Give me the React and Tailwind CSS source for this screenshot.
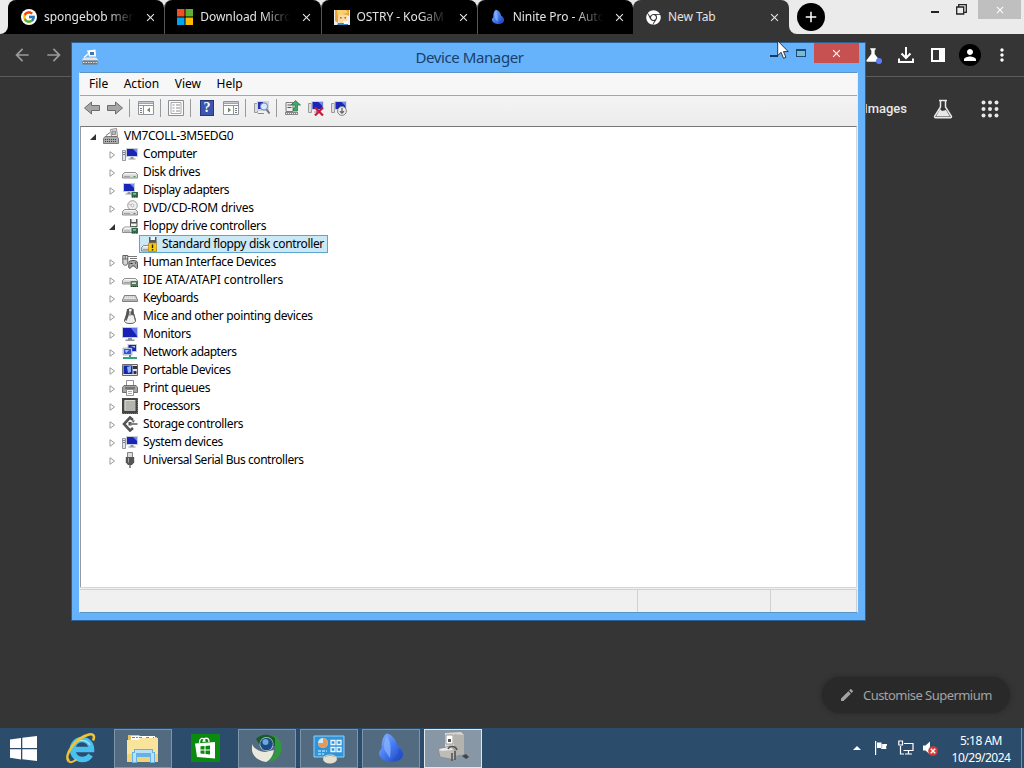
import { FcGoogle } from "react-icons/fc";
import { FaChrome } from "react-icons/fa";
import { MdArrowBack, MdArrowForward, MdClose, MdAdd, MdScience, MdPerson, MdMoreVert, MdEdit } from "react-icons/md";

/* ---------- small drawings ---------- */

const Svg = ({ size = 16, box = "0 0 16 16", className = "", children }) => (
  <svg width={size} height={size} viewBox={box} className={`shrink-0 ${className}`} fill="none">
    {children}
  </svg>
);

const MicrosoftIcon = () => (
  <Svg>
    <path fill="#f25022" d="M0 0h7.5v7.5H0z" />
    <path fill="#5fb030" d="M8.5 0H16v7.5H8.5z" />
    <path fill="#00a4ef" d="M0 8.5h7.5V16H0z" />
    <path fill="#ffb900" d="M8.5 8.5H16V16H8.5z" />
  </Svg>
);

const KogamaIcon = () => (
  <Svg>
    <path fill="#e9eef0" d="M0 1h16v15H0z" />
    <path fill="#e7a33c" d="M1 1h14v6l-2-1-3 1-3-1-3 3v5l-3-2z" />
    <path fill="#ffd9a0" d="M4 6l4-1 5 1v6l-3 3H6l-2-3z" />
    <path fill="#f7d26a" d="M3 1h9l2 3-6 1-4 2z" />
    <path fill="#8a6a4a" d="M6 8h1.500v1.500H6zM10.500 8H12v1.500h-1.500z" />
    <path fill="#2b8fc4" d="M4 14h10v2H3z" />
    <path fill="#fff" d="M9 12h5v3h-4z" />
  </Svg>
);

const NiniteIcon = ({ size = 16 }) => (
  <Svg size={size}>
    <defs>
      <linearGradient id="nin" x1="0" y1="0" x2="1" y2="1">
        <stop offset="0" stopColor="#8fb6ff" />
        <stop offset=".5" stopColor="#4379f0" />
        <stop offset="1" stopColor="#1c3fb5" />
      </linearGradient>
    </defs>
    <path fill="url(#nin)" d="M6 .8c2.500.5 4.500 3 5.200 6 2 1 3.300 3.500 2.800 5C13.500 14 11 15 8.500 15 5 15 1.800 13 2 10.500c.2-1.500 1.300-1.500 1.400-3C3.200 5 4 1.600 6 .8z" />
    <path fill="#8db7ff" opacity=".7" d="M6 2C4.500 4 4.300 7 4.800 9l2.700 4C8 9 8 5 6 2z" />
    <path fill="#2450cc" opacity=".6" d="M12 8c1.500 2 2 4 1 5-2 1.500-4 1-5 1 2-1 4-3 4-6z" />
  </Svg>
);

const Monitor = ({ x = 3, y = 2 }) => (
  <g transform={`translate(${x} ${y})`}>
    <path fill="#c9ced8" d="M0 0h12v9H0z" />
    <path fill="#1a25b8" d="M1 1h10v7H1z" />
    <path fill="#6f8cf0" d="M7 1h4v4z" />
    <path fill="#8d97a5" d="M4.500 9h3v1.500h-3zM2.500 10.500h7v1h-7z" />
  </g>
);

const Drive = ({ y = 9 }) => (
  <g transform={`translate(0 ${y})`}>
    <path fill="#dadada" stroke="#777" strokeWidth=".8" d="M2.500.5h11l2 2v3.500H.5V2.500z" />
    <path fill="#f8f8f8" d="M2.800 1h10.400l1 1.200H1.800z" />
    <path fill="#3d9a44" d="M11.500 4h2v1h-2z" />
    <path stroke="#888" strokeWidth=".7" d="M2 4.500h6" />
  </g>
);

const Chip = () => (
  <g>
    <path fill="#2c6e48" d="M9.500 10H16v5.500H9.500z" />
    <path fill="#b8d6c0" d="M11 11.300h3v1.200h-3z" />
    <path stroke="#223" strokeWidth=".7" strokeDasharray="1 1" d="M10 15h6" />
  </g>
);

const DEVICE = {
  root: (
    <>
      <path fill="#eee" stroke="#777" strokeWidth=".8" d="M7.500 1.500l6-1 1 8h-6z" />
      <path fill="#bbb" stroke="#666" strokeWidth=".6" d="M9 3h3.500v3.500H9z" />
      <path fill="#aaa" stroke="#666" strokeWidth=".8" d="M2 8.500h12l1.500 2v5H.5v-5z" />
      <path stroke="#444" strokeDasharray="1 1" d="M2 11.500h12M2 13.500h12" />
      <path stroke="#777" d="M3 7.500l4-3" />
    </>
  ),
  title: (
    <>
      <path fill="#fff" d="M5 1.500l8.500-1 .5 7H7z" />
      <path fill="#3c79b4" d="M8 3h4v3H8z" />
      <path stroke="#fff" strokeWidth="1.500" d="M2 8.500l4-3.500" />
      <path fill="#e4e4e4" d="M2 8.500h12l2 2v1H0v-1z" />
      <path fill="#777" d="M.5 11.500h15v4H.5z" />
      <path stroke="#ddd" strokeDasharray="1.500 1" d="M1 13.500h14" />
    </>
  ),
  computer: (
    <>
      <path fill="#e6e6ea" stroke="#7b8290" strokeWidth=".8" d="M.5 4.500h3v10h-3z" />
      <path stroke="#666" strokeWidth=".8" d="M1 6.500h2M1 8.500h2" />
      <Monitor x={4} y={2} />
    </>
  ),
  disk: <Drive y={8} />,
  display: (
    <>
      <Monitor x={1} y={1} />
      <Chip />
    </>
  ),
  dvd: (
    <>
      <circle cx="10.500" cy="5.500" r="4.800" fill="#eee" stroke="#888" strokeWidth=".8" />
      <circle cx="10.500" cy="5.500" r="1.400" fill="#fff" stroke="#999" strokeWidth=".7" />
      <path stroke="#d9a8c0" d="M7 4l2 1" />
      <Drive y={9} />
    </>
  ),
  floppy: (
    <>
      <path fill="#555" d="M8 1h7.500v8H8z" />
      <path fill="#f2f2f2" d="M9.500 1h4.500v3H9.500zM9 5.500h5.500V8H9z" />
      <Drive y={8.500} />
      <Chip />
    </>
  ),
  floppyWarn: (
    <>
      <path fill="#555" d="M8 1h7.500v8H8z" />
      <path fill="#e8f6ff" d="M9.500 1h4.500v3H9.500z" />
      <Drive y={9} />
      <path fill="#f6c915" stroke="#b98a05" strokeWidth=".7" d="M7.500 7h8v8.500h-8z" />
      <path stroke="#222" strokeWidth="1.400" d="M11.500 8.500v3.500M11.500 13v1.500" />
    </>
  ),
  hid: (
    <>
      <path fill="#d4d4d4" stroke="#555" strokeWidth=".9" d="M.8 1.500h5V9c0 3-5 3-5 0z" />
      <path stroke="#555" strokeWidth=".8" d="M3.300 1.500V5M.8 5h5M6 2.500h9M8 4.500h7" />
      <path fill="#aaa" stroke="#444" strokeWidth=".9" d="M7 8c0-2 8-2 8.300 0l.3 6c-1 1.500-2.500-.5-3-2H10c-.6 2-2.600 3-3.300 1.500z" />
      <path stroke="#222" strokeWidth="1" d="M8.500 9.500h2M13 9h1" />
    </>
  ),
  ide: (
    <>
      <Drive y={6} />
      <path fill="#53785b" d="M8.500 9H16v6H8.500z" />
      <path fill="#dde8dd" d="M10 10.500h4V12h-4z" />
      <path stroke="#333" strokeDasharray="1 1" d="M9 14.500h7" />
    </>
  ),
  keyboard: (
    <>
      <path fill="#ccc" stroke="#666" strokeWidth=".8" d="M2.500 5.500h11l2 4.500v1.500H.5V10z" />
      <path stroke="#fff" strokeWidth=".8" strokeDasharray="1.200 .8" d="M3 7h10M2.500 8.500h11" />
      <path stroke="#888" strokeWidth=".8" d="M1.500 10h13" />
    </>
  ),
  mouse: (
    <>
      <path fill="#efefef" stroke="#555" strokeWidth=".9" d="M5.500 4h5l3 8c.5 3-3 3.500-5.500 3.500S2 15 2.500 12z" />
      <path fill="#555" d="M5 1h2v5.500L4.500 13 3 12zM10 1h1.500L12 6l-2 1.500L8.500 6z" />
      <path stroke="#444" d="M6 1.500c1-1.200 4-1.200 5 0" />
      <path stroke="#666" d="M12 6l1.500 7" />
      <circle cx="8" cy="6.500" r="1.200" fill="#999" />
    </>
  ),
  monitor: (
    <>
      <path fill="#c5cad5" d="M0 1h16v11H0z" />
      <path fill="#1820b5" d="M1 2h14v9H1z" />
      <path fill="#5a78ea" d="M9 2h6v8z" />
      <path fill="#8a93a0" d="M6 12h4v1.500H6zM3.500 13.500h9v1.500h-9z" />
    </>
  ),
  network: (
    <>
      <path fill="#c5cad5" d="M5.500 0H15v8H5.500z" />
      <path fill="#1a25b8" d="M6.500 1H14v6H6.500z" />
      <path fill="#d8dde5" stroke="#8791a8" strokeWidth=".6" d="M1 4h9v7H1z" />
      <path fill="#3552d8" d="M2 5h7v5H2z" />
      <path fill="#a8c4fa" d="M3 6h4l-3 3zM9 2h4v2z" />
      <path fill="#2fa67a" d="M7 11h2v2h6v2H1v-2h6z" />
    </>
  ),
  portable: (
    <>
      <path fill="#dfe3ea" stroke="#444" strokeWidth=".8" d="M.5 2.500h15v11H.5z" />
      <path fill="#1525ac" d="M1.500 3.500h9v8.500h-9z" />
      <path fill="#8db2f5" d="M5 5l4-1v6l-3 1z" />
      <path fill="#333" d="M11 4h4v3h-4zM11.500 9h3v3h-3z" />
    </>
  ),
  printer: (
    <>
      <path fill="#fff" stroke="#777" strokeWidth=".8" d="M4.500.5h7v6h-7z" />
      <path fill="#a5a5a5" stroke="#555" strokeWidth=".8" d="M2 5.500h12l1.500 2v5H.5v-5z" />
      <path stroke="#444" d="M3 8h10" />
      <path fill="#fff" stroke="#777" strokeWidth=".8" d="M4.500 9.500h7v6h-7z" />
      <path stroke="#888" strokeWidth=".7" d="M6 11.500h4M6 13.500h4" />
    </>
  ),
  cpu: (
    <>
      <path fill="#444" d="M0 0h16v16H0z" />
      <path stroke="#777" strokeDasharray="1 1" d="M0 15.500h16M15.500 0v16" />
      <path fill="#b5b5b0" d="M2.500 2h11v11h-11z" />
      <path stroke="#deded8" d="M3 12.500v-10h10" />
    </>
  ),
  storage: (
    <>
      <path stroke="#555" strokeWidth="2.600" d="M11 4L8 1.500 2 8l6 6.500 3-2.500" />
      <path fill="#555" d="M10 4.500h3l-2 2.500zM6.500 6h3v3.500h-3z" />
      <path stroke="#777" strokeWidth="1.800" d="M8 8h7.500" />
    </>
  ),
  usb: (
    <>
      <path fill="#ddd" stroke="#666" strokeWidth=".8" d="M5.500.5h5v5h-5z" />
      <path fill="#555" d="M3.800 5h8.400v5.500L10 13H6l-2.200-2.500z" />
      <path stroke="#aaa" d="M6.500 6v4.500" />
      <path stroke="#777" strokeWidth="1.600" d="M8 13v3" />
    </>
  ),
};

const Arrow = ({ flip }) => (
  <Svg size={18} box="0 0 18 18" className={flip ? "-scale-x-100" : ""}>
    <path fill="#a6a6a6" stroke="#6c6c6c" d="M1.500 9L8.500 3v3.500h8v5h-8V15z" />
  </Svg>
);

const PanelIcon = ({ right }) => (
  <Svg size={18} box="0 0 18 18">
    <path fill="#fdfdfd" stroke="#8d949c" d="M1.500 2.500h15v13h-15z" />
    <path stroke="#9aa1ab" strokeWidth="1.500" d="M2 4.200h14" />
    <path stroke="#8d949c" d={right ? "M2 6.500h14M11.500 7v8" : "M2 6.500h14M6.500 7v8"} />
    <path stroke="#777" strokeDasharray="2 1" d={right ? "M13 9.500h2.500M13 11.500h2.500M13 13.500h2.500" : "M3 9.500h2.500M3 11.500h2.500M3 13.500h2.500"} />
    <path fill="#6d8a68" d={right ? "M6 8.500l3 2.500-3 2.500z" : "M13 8.500L10 11l3 2.500z"} />
  </Svg>
);

const PropsIcon = () => (
  <Svg>
    <path fill="#fafafa" stroke="#8a8f96" d="M.5.5h15v15H.5z" />
    <path fill="#fff" stroke="#aaa" d="M3 2.500h10v11H3z" />
    <path stroke="#8c8c8c" d="M4.500 5h2M8 5h4M4.500 8h2M8 8h4M4.500 11h2M8 11h4" />
  </Svg>
);

const HelpIcon = () => (
  <div className="grid h-4 w-[14px] place-items-center border border-[#24377c] bg-[#3c55ad] font-['Liberation_Serif',serif] text-[14px] leading-none font-bold text-white">
    ?
  </div>
);

const ScanIcon = () => (
  <Svg>
    <path fill="#ddd" stroke="#888" strokeWidth=".8" d="M.5 3.500h3v9h-3z" />
    <path fill="#ced4e0" d="M3 1h12v10H3z" />
    <path fill="#2737b4" d="M4 2h5v7H4z" />
    <circle cx="10" cy="6.500" r="3.600" fill="#d9e8fb" stroke="#7286a8" />
    <path stroke="#777" strokeWidth="2" d="M12.500 9.500l3 4" />
    <path stroke="#888" d="M4 13.500h6" />
  </Svg>
);

const UpdateIcon = () => (
  <Svg>
    <path fill="#efefef" stroke="#717171" strokeWidth=".9" d="M1 2.500h7v9H1z" />
    <path stroke="#555" d="M2.500 5h4M2.500 7.500h4" />
    <path fill="#888" d="M0 12h13v3H0z" />
    <path stroke="#eee" strokeDasharray="1 1" d="M1 13.500h11" />
    <path fill="#41a86b" stroke="#1e7042" strokeWidth=".7" d="M10.500.5L15.500 5h-3v6H8.500V8h1.500V5H6z" />
  </Svg>
);

const UninstallIcon = () => (
  <Svg>
    <path fill="#ddd" stroke="#888" strokeWidth=".8" d="M.5 3.500h3v9h-3z" />
    <Monitor x={3.500} y={1} />
    <path stroke="#c9193a" strokeWidth="2.200" d="M7 7.500l8 8M15 7.500l-8 8" />
  </Svg>
);

const DisableIcon = () => (
  <Svg>
    <path fill="#ddd" stroke="#888" strokeWidth=".8" d="M.5 3.500h3v9h-3z" />
    <Monitor x={3.500} y={1} />
    <circle cx="11" cy="11" r="4.400" fill="#eee" stroke="#848484" />
    <path stroke="#666" strokeWidth="1.300" d="M11 8v5M9 11.200l2 2 2-2" />
  </Svg>
);

/* ---------- browser ---------- */

const TABS = [
  { icon: <span className="grid size-4 place-items-center rounded-full bg-white"><FcGoogle size={14} /></span>, title: "spongebob mem" },
  { icon: <MicrosoftIcon />, title: "Download Micro" },
  { icon: <KogamaIcon />, title: "OSTRY - KoGaM" },
  { icon: <NiniteIcon />, title: "Ninite Pro - Auto" },
];

const Tab = ({ icon, title, active }) => (
  <div className={`flex h-[34px] w-[156.25px] shrink-0 items-center rounded-t-lg pl-3 ${active ? "bg-[#353535]" : "border-l border-[#555] bg-black first:border-black"}`}>
    <span className="grid size-4 shrink-0 place-items-center text-white">{icon}</span>
    <span className={`ml-[7px] w-[90px] overflow-hidden text-[12px] tracking-[-0.05px] whitespace-nowrap text-[#e3e3e3] ${active ? "" : "mask-r-from-70%"}`}>{title}</span>
    <MdClose size={13} className="ml-[10px] shrink-0 text-[#e8e8e8]" />
  </div>
);

const Browser = () => (
  <div className="flex h-[728px] flex-col bg-[#353535]">
    <div className="flex h-[34px] bg-[#353535]">
      <div className="w-2 bg-black">
        <div className="h-full rounded-br-lg bg-[#ebebeb]" />
      </div>
      <div className="flex bg-[linear-gradient(#e8e8e8_0_10px,#000_10px)]">
        {TABS.map((t) => (
          <Tab key={t.title} {...t} />
        ))}
      </div>
      <div className="bg-[#e8e8e8]">
        <Tab icon={<FaChrome size={15} />} title="New Tab" active />
      </div>
      <div className="flex flex-1 rounded-bl-lg bg-[#ebebeb]">
        <div className="mt-[3px] ml-[8px] grid size-7 place-items-center rounded-full bg-black text-white">
          <MdAdd size={18} />
        </div>
        <div className="ml-auto flex h-[19px] items-start text-[#222]">
          <span className="mt-[11px] mr-[17px] h-0.5 w-2 bg-[#222]" />
          <Svg size={11} box="0 0 11 11" className="mt-1 mr-[11px]">
            <path stroke="#222" strokeWidth="1.300" d="M.7 3h7v7h-7zM2.700 3V.7h7.600v7.600H8" />
          </Svg>
          <span className="mr-[3px] grid h-[19px] w-[43px] place-items-center bg-[#bfbfbf] text-white">
            <MdClose size={12} />
          </span>
        </div>
      </div>
    </div>
    <div className="flex h-[43px] items-center border-b border-[#5c5c5c] text-white">
      <MdArrowBack size={20} className="ml-3 text-[#9b9b9b]" />
      <MdArrowForward size={20} className="ml-3 text-[#9b9b9b]" />
      <div className="mr-[12px] ml-auto flex items-center">
        <div className="relative mr-[14px]">
          <MdScience size={20} />
          <span className="absolute right-[1px] bottom-[1px] size-[6px] rounded-full bg-[#5d7df5]" />
        </div>
        <Svg size={18} box="0 0 18 18">
          <path stroke="#fff" strokeWidth="2" d="M9 1v10.500M4.500 7.500L9 12l4.500-4.500M2 12.500V16h14v-3.500" />
        </Svg>
        <Svg size={14} box="0 0 14 14" className="ml-4">
          <path fill="#fff" fillRule="evenodd" d="M0 0h14v14H0zM2 2v10h6V2z" />
        </Svg>
        <span className="ml-[14px] grid size-[22px] place-items-center rounded-full bg-black">
          <MdPerson size={18} />
        </span>
        <MdMoreVert size={20} className="ml-[11px]" />
      </div>
    </div>
    <div className="flex h-16 items-center justify-end pr-[25px] text-[#e8e8e8]">
      <span className="mr-[26px] font-[Roboto,sans-serif] text-[13px] font-medium">Images</span>
      <Svg size={20} box="0 0 20 20" className="mr-[28px]">
        <path stroke="#e8e8e8" strokeWidth="1.500" d="M6 1.500h8M7.500 2v6L1.500 17.500c0 .8.500 1.200 1 1.200h15c.5 0 1-.4 1-1.200L12.500 8V2" />
        <path fill="#e8e8e8" d="M7 10l2 2 4-1 4 6.500H3z" />
      </Svg>
      <Svg size={18} box="0 0 18 18">
        {[2.500, 9, 15.500].map((y) => [2.500, 9, 15.500].map((x) => <circle key={`${x}-${y}`} cx={x} cy={y} r="2" fill="#e8e8e8" />))}
      </Svg>
    </div>
    <div className="mt-auto mr-[14px] mb-[15px] flex h-9 w-[188px] items-center self-end rounded-full bg-[#292929] pl-[17px] text-[#a3a3a3] shadow-[0_0_5px_#272727]">
      <MdEdit size={16} className="shrink-0" />
      <span className="mt-0.5 ml-2 text-[13px] tracking-[-0.54px] whitespace-nowrap">Customise Supermium</span>
    </div>
  </div>
);

/* ---------- device manager ---------- */

const NODES = [
  { icon: "computer", label: "Computer" },
  { icon: "disk", label: "Disk drives" },
  { icon: "display", label: "Display adapters", track: "tracking-[-0.5px]" },
  { icon: "dvd", label: "DVD/CD-ROM drives", track: "tracking-[-0.2px]" },
  { icon: "floppy", label: "Floppy drive controllers", open: true },
  { icon: "hid", label: "Human Interface Devices" },
  { icon: "ide", label: "IDE ATA/ATAPI controllers", track: "tracking-[-0.1px]" },
  { icon: "keyboard", label: "Keyboards", track: "tracking-[-0.45px]" },
  { icon: "mouse", label: "Mice and other pointing devices", track: "tracking-[-0.33px]" },
  { icon: "monitor", label: "Monitors" },
  { icon: "network", label: "Network adapters", track: "tracking-[-0.5px]" },
  { icon: "portable", label: "Portable Devices" },
  { icon: "printer", label: "Print queues" },
  { icon: "cpu", label: "Processors", track: "tracking-[-0.45px]" },
  { icon: "storage", label: "Storage controllers" },
  { icon: "computer", label: "System devices" },
  { icon: "usb", label: "Universal Serial Bus controllers", track: "tracking-[-0.44px]" },
];

const Twisty = ({ open }) => (
  <Svg size={8} box="0 0 8 8" className="mt-[2px]">
    {open ? <path fill="#333" d="M7 1v6H1z" /> : <path stroke="#999" d="M2 .7v6.600L6.500 4z" />}
  </Svg>
);

const Node = ({ icon, label, open, track = "tracking-[-0.38px]" }) => (
  <div className="flex h-[18px] items-center pl-[27px]">
    <Twisty open={open} />
    <Svg className="ml-[6px]">{DEVICE[icon]}</Svg>
    <span className={`ml-[5px] whitespace-nowrap ${track}`}>{label}</span>
  </div>
);

const Sep = () => <span className="h-[18px] w-px shrink-0 bg-[#9a9a9a]" />;

const DeviceManager = () => (
  <div className="absolute top-[42px] left-[71px] flex h-[579px] w-[795px] flex-col border border-[#2a6095] bg-[#66b3fb] px-[7px] pb-[7px] text-[12px] text-black">
    <div className="-mr-px flex h-[29px] shrink-0 items-start">
      <Svg className="mt-[6px] ml-[3px]">{DEVICE.title}</Svg>
      <span className="mt-[3px] flex-1 pl-[71px] text-center text-[15px] leading-[22px] tracking-[-0.4px] text-[#17406c]">Device Manager</span>
      <span className="mt-[12px] mr-[18px] h-0.5 w-2 bg-[#163a5c]" />
      <span className="mt-[6px] mr-[8px] h-[8px] w-[10px] border border-t-2 border-[#1c4a70] bg-[#78b9d8]" />
      <span className="grid h-5 w-[45px] place-items-center bg-[#c75050] text-white">
        <MdClose size={13} />
      </span>
    </div>
    <div className="flex min-h-0 flex-1 flex-col border border-x-[#e3eef8] border-y-[#5a95c8] bg-[#f0f0f0]">
      <div className="flex h-[23px] shrink-0 items-center gap-[15.5px] border-b border-[#a5a5a5] bg-[#f7f7f7] pl-[9px]">
        <span>File</span>
        <span>Action</span>
        <span>View</span>
        <span>Help</span>
      </div>
      <div className="flex h-[30px] shrink-0 items-center bg-[linear-gradient(#f4f4f4,#ececec)] pb-[6px] pl-[3px]">
        <Arrow />
        <span className="w-[5px]" />
        <Arrow flip />
        <span className="w-[5px]" />
        <Sep />
        <span className="w-[7px]" />
        <PanelIcon />
        <span className="w-[5px]" />
        <Sep />
        <span className="w-[7px]" />
        <PropsIcon />
        <span className="w-[6px]" />
        <Sep />
        <span className="w-[9px]" />
        <HelpIcon />
        <span className="w-[8px]" />
        <PanelIcon right />
        <span className="w-[5px]" />
        <Sep />
        <span className="w-[8px]" />
        <ScanIcon />
        <span className="w-[6px]" />
        <Sep />
        <span className="w-[8px]" />
        <UpdateIcon />
        <span className="w-[7px]" />
        <UninstallIcon />
        <span className="w-[7px]" />
        <DisableIcon />
      </div>
      <div className="min-h-0 flex-1 border-t border-r border-l border-t-[#777] border-r-[#d8d8d8] border-l-[#999] bg-white">
        <div className="flex h-[18px] items-center pl-[8px]">
          <Twisty open />
          <Svg className="ml-[6px]">{DEVICE.root}</Svg>
          <span className="ml-[5px] tracking-[-0.3px]">VM7COLL-3M5EDG0</span>
        </div>
        {NODES.map((n) => (
          <div key={n.label}>
            <Node {...n} />
            {n.open && (
              <div className="ml-[58px] flex h-[18px] w-[189px] items-center border border-[#5ba5cf] bg-[#cbe8f6] pl-[1px]">
                <Svg>{DEVICE.floppyWarn}</Svg>
                <span className="ml-[5px] tracking-[-0.36px] whitespace-nowrap">Standard floppy disk controller</span>
              </div>
            )}
          </div>
        ))}
      </div>
      <div className="flex h-[25px] shrink-0 border-t border-[#d5d5d5] pt-px">
        <span className="w-[558px] border-t border-r border-[#d0d0d0]" />
        <span className="w-[133px] border-t border-r border-[#d0d0d0]" />
        <span className="w-[86px] border-t border-r border-[#d0d0d0]" />
      </div>
    </div>
  </div>
);

const Cursor = () => (
  <svg width="14" height="20" viewBox="0 0 14 20" className="absolute top-[40px] left-[777px]">
    <path fill="#fff" stroke="#222" strokeWidth=".9" d="M.7.8v14.700l3.400-3.200 2.400 6 2.400-1-2.400-5.700h4.700z" />
  </svg>
);

/* ---------- taskbar ---------- */

const WinLogo = () => (
  <svg width="27" height="25" viewBox="0 0 27 25" fill="#fff">
    <path d="M0 3.600L11 2v10H0zM12.300 1.800L27 0v12H12.300zM0 13.200h11v10.200L0 21.800zM12.300 13.200H27V25l-14.700-1.800z" />
  </svg>
);

const IeIcon = () => (
  <svg width="32" height="32" viewBox="0 0 32 32" fill="none">
    <path stroke="#49c0f0" strokeWidth="5.500" d="M7 17.500h19.500C26.500 11.500 22 7.500 17 7.500S7.500 12 7.500 17.500 12 27.500 17 27.500c4 0 7-2 8.500-4.500" />
    <path stroke="#a9e7fb" strokeWidth="1.200" d="M9 12c2-4 12-6 16 1" />
    <path stroke="#f2c431" strokeWidth="2.600" d="M4 29.500C-2 24 10 6 24 2.500c5-1 6 2 4 6" />
    <path stroke="#f2c431" strokeWidth="2" d="M4 29.500c2 1.500 5 0 7.500-2" />
  </svg>
);

const ExplorerIcon = () => (
  <svg width="34" height="32" viewBox="0 0 34 32" fill="none">
    <path fill="#e8c15c" d="M2 3h11l2 2h16v24H2z" />
    <path fill="#fff" d="M5 4h24v6H5z" />
    <path stroke="#c66b4e" strokeDasharray="3 4" d="M6 5.500h22" />
    <path stroke="#6b9e58" strokeDasharray="2 8" d="M10 5.500h18" />
    <path fill="#fae49b" d="M1 8h11l3-2h17v23l-1 1H2l-1-1z" />
    <path fill="#f3d37a" d="M1 22h31v8H1z" />
    <path fill="#63b3e8" d="M8 17h19v3h2v11h-5v-6H11v6H6V20h2z" />
    <path fill="#b9e0f8" d="M9 18h17v3H9zM7 21h3v9H7zM25 21h3v9h-3z" />
  </svg>
);

const StoreIcon = () => (
  <svg width="29" height="30" viewBox="0 0 29 30" fill="none">
    <path fill="#0a8a0f" d="M0 1h29v28H0z" />
    <path stroke="#fff" strokeWidth="1.300" d="M8.500 10c0-6 5-6 5.500-1M12 9c1-5 6-5 6 0" />
    <path fill="#fff" d="M4 10.500l20-1.500V25.500L6 24z" />
    <path fill="#0a8a0f" d="M9.500 13.300l4-.3v3.500h-4zM14.500 12.900l4.500-.4v4h-4.500zM9.500 17.500h4V21l-4-.4zM14.500 17.500H19v4l-4.500-.4z" />
  </svg>
);

const SupermiumIcon = () => (
  <svg width="32" height="32" viewBox="0 0 32 32" fill="none">
    <path fill="#2f9a3b" d="M20 3c8 1 11 8 10.500 14C30 24 24 30 16 30c6-4 9-9 8-16z" />
    <path fill="#175c22" d="M5 7c6-6 14-5 19-1v8L8 12z" />
    <path fill="#e9e9dc" d="M1 12c2 5 7 7 13 8l9-2c-1 6-4 10-8 12C7 29 0 23 1 16z" />
    <circle cx="15.500" cy="12" r="7" fill="#b9c9d4" />
    <circle cx="15.500" cy="12" r="6.300" fill="#1b4a84" />
    <circle cx="14.500" cy="10" r="3" fill="#6aa7dc" />
  </svg>
);

const ControlPanelIcon = () => (
  <svg width="32" height="32" viewBox="0 0 32 32" fill="none">
    <path fill="#3095d8" stroke="#8fd0f5" d="M1 4h30v21H1z" />
    <circle cx="10" cy="11" r="5" fill="#d5e9f5" />
    <path fill="#e59a5c" d="M10 11V6a5 5 0 11-5 5z" />
    <path stroke="#e9f6ff" strokeWidth="1.300" d="M18 8.500h4v4h-4zM24 8.500h4v4h-4zM18 15.500h4v4h-4zM24 15.500h4v4h-4z" />
    <path stroke="#a6d8f5" strokeDasharray="3 1" strokeWidth="1.500" d="M5 19h9M5 22h6" />
    <ellipse cx="17" cy="27" rx="7" ry="4.500" fill="#e5dfd0" />
    <path stroke="#b5ab98" d="M12 25c3-2 7-2 10 0" />
  </svg>
);

const DeviceTaskIcon = () => (
  <svg width="34" height="34" viewBox="0 0 34 34" fill="none">
    <path fill="#d9d7d0" d="M9 2l16-1 3 3v19l-10 2-9-3z" />
    <path fill="#9c9b98" d="M18 3l10 1v19l-10 2z" opacity=".6" />
    <path fill="#fff" stroke="#999" d="M10 4h7v9h-7z" />
    <path fill="#555" d="M12 8h3v3h-3z" />
    <path fill="#bdbcb8" stroke="#888" strokeWidth=".8" d="M2 18l13-3 4 4v10L4 26z" />
    <path fill="#e8e8e8" d="M3 18l11-2 3 3-12 1z" />
    <path stroke="#555" strokeWidth="1.600" d="M12 18c2-4 8-3 9 1M16 30v-8M19 29v-9" />
    <path fill="#444" d="M26 25l4-2 3 3-3 2z" />
  </svg>
);

const TASKS = [
  { icon: <IeIcon />, name: "ie" },
  { icon: <ExplorerIcon />, name: "explorer", open: true },
  { icon: <StoreIcon />, name: "store" },
  { icon: <SupermiumIcon />, name: "supermium", open: true },
  { icon: <ControlPanelIcon />, name: "control", open: true },
  { icon: <NiniteIcon size={32} />, name: "ninite", open: true },
  { icon: <DeviceTaskIcon />, name: "devmgmt", active: true },
];

const taskStyle = ({ open, active }) => {
  if (active) return "border border-[#dfe6ec] bg-[#8797a5]";
  return open ? "border border-[#7e95a8] bg-[#536b81]" : "";
};

const Taskbar = () => (
  <div className="flex h-10 items-center bg-[#2b4d6b]">
    <div className="ml-[10px] w-[42px]">
      <WinLogo />
    </div>
    <div className="flex gap-1">
      {TASKS.map((t) => (
        <div key={t.name} className={`grid h-[39px] w-[58px] place-items-center ${taskStyle(t)}`}>
          {t.icon}
        </div>
      ))}
    </div>
    <div className="ml-auto flex items-center text-white">
      <Svg size={8} box="0 0 8 8">
        <path fill="#fff" d="M0 6l4-4 4 4z" />
      </Svg>
      <Svg className="ml-[12px]">
        <path fill="#fff" d="M2 1h1.200v14H2zM4 2.500h4.500v1.500h5.500v1l-1 2 .5 2H8V8H4z" />
        <path fill="#7b92a5" d="M8.500 4h.7v4.500h-.7z" />
      </Svg>
      <Svg className="ml-[9px]">
        <path stroke="#fff" strokeWidth="1.200" d="M6 3.500h9v7H5.500M10.500 10.500V14M7 14h7M2.500 6v8H6" />
        <path stroke="#fff" strokeWidth="1.200" d="M.8 1h3.700v4H.8z" />
      </Svg>
      <Svg className="ml-[8px]">
        <path fill="#fff" d="M1 5.500h2.500L8 1.500v13L3.500 10.500H1z" />
        <circle cx="11" cy="11" r="4.800" fill="#d83a36" />
        <path stroke="#fff" strokeWidth="1.500" d="M8.800 8.800l4.400 4.400M13.200 8.800l-4.400 4.400" />
      </Svg>
      <div className="mt-px mr-[7px] ml-[10px] w-[66px] text-center text-[12px] leading-[17px] tracking-[-0.5px] whitespace-nowrap">
        <div>5:18 AM</div>
        <div>10/29/2024</div>
      </div>
      <span className="h-10 w-[3px] border-l border-[#7991a5]" />
    </div>
  </div>
);

export default function App() {
  return (
    <div className="relative h-[768px] w-[1024px] overflow-hidden font-['Noto_Sans','Open_Sans',sans-serif]">
      <Browser />
      <Taskbar />
      <DeviceManager />
      <Cursor />
    </div>
  );
}
